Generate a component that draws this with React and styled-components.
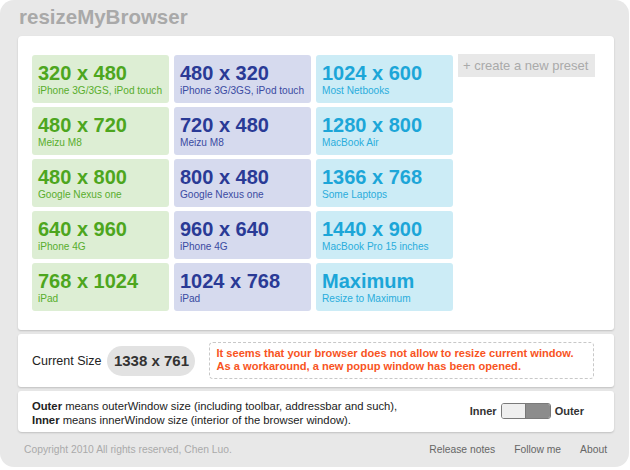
import React from "react";
import styled, { createGlobalStyle } from "styled-components";

const Global = createGlobalStyle`
  html, body { margin: 0; padding: 0; background: #ffffff; }
  body { font-family: "Liberation Sans", Arial, Helvetica, sans-serif; }
  * { box-sizing: border-box; }
`;

const palettes = {
  green: { bg: "#ddeed4", fg: "#4da61e", sub: "#58ad2c" },
  blue: { bg: "#d6daee", fg: "#2a3a96", sub: "#3a4aa2" },
  cyan: { bg: "#ccecf6", fg: "#1ca6d8", sub: "#2aaddc" },
};

const Frame = styled.div`
  width: 629px;
  height: 467px;
  background: #e8e8e8;
  border-radius: 14px;
  padding: 5px 15px 0 18px;
  display: flex;
  flex-direction: column;
`;

const Title = styled.h1`
  margin: 0 0 7px 1px;
  font-size: 20.5px;
  line-height: 24px;
  font-weight: bold;
  color: #a9a9a9;
`;

const Panels = styled.div`
  display: flex;
  flex-direction: column;
  gap: 4px;
`;

const Panel = styled.section`
  background: #ffffff;
  border-radius: ${(p) => p.$radius || "3px"};
  box-shadow: 0 1px 2px rgba(0, 0, 0, 0.18);
`;

const PresetPanel = styled(Panel)`
  height: 294px;
  padding: 19px 14px;
  display: flex;
  gap: 5px;
`;

const Column = styled.div`
  display: flex;
  flex-direction: column;
  gap: 4px;
  width: 137px;
`;

const Tile = styled.div`
  height: 48px;
  border-radius: 3px;
  padding: 6px 6px 0;
  background: ${(p) => palettes[p.$tone].bg};
  color: ${(p) => palettes[p.$tone].fg};
  cursor: pointer;
`;

const TileSize = styled.div`
  font-size: 20px;
  line-height: 24px;
  font-weight: bold;
`;

const TileName = styled.div`
  font-size: 10.1px;
  line-height: 12px;
  white-space: nowrap;
  color: ${(p) => palettes[p.$tone].sub};
`;

const NewPreset = styled.div`
  height: 23px;
  background: #e8e8e8;
  color: #aaaaaa;
  font-size: 13px;
  line-height: 23px;
  padding-left: 5px;
  white-space: nowrap;
  margin-top: -1px;
`;

const CurrentPanel = styled(Panel)`
  height: 53px;
  padding: 0 20px 0 14px;
  display: flex;
  align-items: center;
`;

const Label = styled.span`
  font-size: 12.5px;
  color: #222;
  white-space: nowrap;
  flex-shrink: 0;
`;

const SizePill = styled.span`
  margin-left: 6px;
  flex-shrink: 0;
  width: 88px;
  height: 30px;
  border-radius: 15px;
  background: #e2e2e2;
  color: #333;
  font-size: 15px;
  font-weight: bold;
  display: flex;
  align-items: center;
  justify-content: center;
`;

const Warning = styled.div`
  margin-left: 14px;
  flex-shrink: 0;
  width: 385px;
  height: 37px;
  border: 1px dashed #c8c8c8;
  border-radius: 4px;
  padding: 4px 0 0 6px;
  color: #f8541e;
  font-size: 11.1px;
  line-height: 13px;
  font-weight: bold;
  white-space: nowrap;
`;

const ModePanel = styled(Panel)`
  height: 41px;
  padding: 0 30px 0 14px;
  display: flex;
  align-items: center;
  justify-content: space-between;
`;

const ModeText = styled.div`
  font-size: 11.25px;
  line-height: 14px;
  color: #222;
  margin-top: 2px;
  white-space: nowrap;
`;

const Toggle = styled.div`
  display: flex;
  align-items: center;
  gap: 4px;
  font-size: 11px;
  font-weight: bold;
  color: #333;
  margin-top: -2px;
`;

const Switch = styled.div`
  width: 50px;
  height: 16px;
  border-radius: 3px;
  border: 1px solid #7a7a7a;
  display: flex;
  overflow: hidden;
`;

const SwitchHalf = styled.span`
  flex: 1;
  background: ${(p) => (p.$on ? "#8c8c8c" : "#efefef")};
  border-left: ${(p) => (p.$on ? "1px solid #777" : "none")};
`;

const Footer = styled.footer`
  display: flex;
  justify-content: space-between;
  padding: 11px 7px 0 6px;
  font-size: 10.3px;
  line-height: 13px;
`;

const Copyright = styled.span`
  color: #aaaaaa;
`;

const Links = styled.nav`
  display: flex;
  gap: 19px;
`;

const Link = styled.a`
  color: #666;
  text-decoration: none;
`;

const columns = [
  {
    tone: "green",
    items: [
      ["320 x 480", "iPhone 3G/3GS, iPod touch"],
      ["480 x 720", "Meizu M8"],
      ["480 x 800", "Google Nexus one"],
      ["640 x 960", "iPhone 4G"],
      ["768 x 1024", "iPad"],
    ],
  },
  {
    tone: "blue",
    items: [
      ["480 x 320", "iPhone 3G/3GS, iPod touch"],
      ["720 x 480", "Meizu M8"],
      ["800 x 480", "Google Nexus one"],
      ["960 x 640", "iPhone 4G"],
      ["1024 x 768", "iPad"],
    ],
  },
  {
    tone: "cyan",
    items: [
      ["1024 x 600", "Most Netbooks"],
      ["1280 x 800", "MacBook Air"],
      ["1366 x 768", "Some Laptops"],
      ["1440 x 900", "MacBook Pro 15 inches"],
      ["Maximum", "Resize to Maximum"],
    ],
  },
];

export default function App() {
  return (
    <>
      <Global />
      <Frame>
        <Title>resizeMyBrowser</Title>
        <Panels>
          <PresetPanel $radius="4px 4px 3px 3px">
            {columns.map((col) => (
              <Column key={col.tone}>
                {col.items.map(([size, name]) => (
                  <Tile key={size} $tone={col.tone}>
                    <TileSize>{size}</TileSize>
                    <TileName $tone={col.tone}>{name}</TileName>
                  </Tile>
                ))}
              </Column>
            ))}
            <Column>
              <NewPreset>+ create a new preset</NewPreset>
            </Column>
          </PresetPanel>
          <CurrentPanel>
            <Label>Current Size</Label>
            <SizePill>1338 x 761</SizePill>
            <Warning>
              It seems that your browser does not allow to resize current window.
              <br />
              As a workaround, a new popup window has been opened.
            </Warning>
          </CurrentPanel>
          <ModePanel $radius="3px 3px 4px 4px">
            <ModeText>
              <b>Outer</b> means outerWindow size (including toolbar, addressbar and such),
              <br />
              <b>Inner</b> means innerWindow size (interior of the browser window).
            </ModeText>
            <Toggle>
              <span>Inner</span>
              <Switch>
                <SwitchHalf />
                <SwitchHalf $on />
              </Switch>
              <span>Outer</span>
            </Toggle>
          </ModePanel>
        </Panels>
        <Footer>
          <Copyright>Copyright 2010 All rights reserved, Chen Luo.</Copyright>
          <Links>
            <Link href="#">Release notes</Link>
            <Link href="#">Follow me</Link>
            <Link href="#">About</Link>
          </Links>
        </Footer>
      </Frame>
    </>
  );
}
